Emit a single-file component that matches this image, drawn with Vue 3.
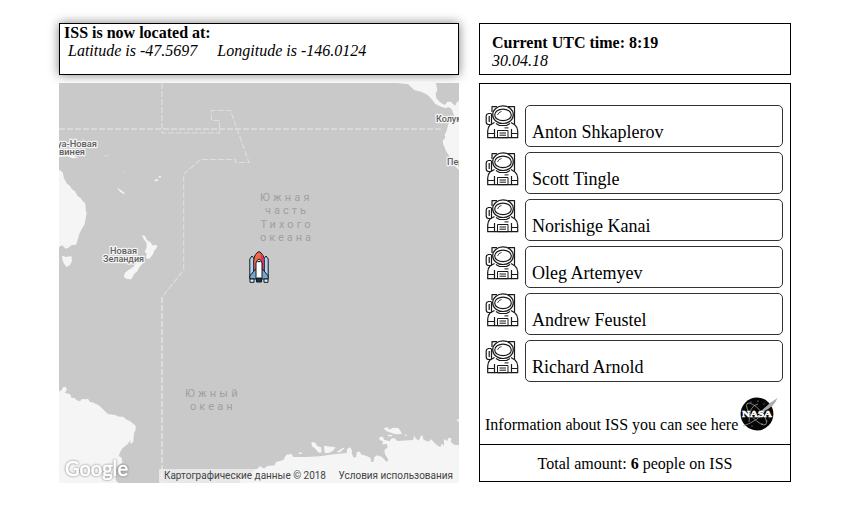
<script setup>
const position = { latitude: '-47.5697', longitude: '-146.0124' }
const crew = [
  'Anton Shkaplerov',
  'Scott Tingle',
  'Norishige Kanai',
  'Oleg Artemyev',
  'Andrew Feustel',
  'Richard Arnold',
]
</script>

<template>
  <main class="page">
    <section class="left">
      <header class="location">
        <b>ISS is now located at:</b>
        <div class="coords">
          <i>Latitude is {{ position.latitude }}</i>
          <i>Longitude is {{ position.longitude }}</i>
        </div>
      </header>

      <svg class="map" width="400" height="400" viewBox="59 83 400 400">
        <rect x="59" y="83" width="400" height="400" fill="#c9c9c9" />

        <g class="borders">
          <path d="M59 129H443" stroke-width="1.6" />
          <path d="M162 83V133H219.5V120.500H211.500V110.500H230.500L249 162.500H235.500V159.500H200.500L183.700 174V270L162 297" />
          <path d="M162 297V483" stroke-width="1.8" />
        </g>

        <g class="land">
          <!-- Australia, Tasmania, New Zealand and the nearby islands -->
          <g transform="translate(50 135) scale(.33333)">
            <path d="M27 104L38 112L42 130L50 145L59 152L66 163L75 169L82 182L92 190L100 200L106 205L107 224L110 236L107 250L104 268L95 282L89 294L83 315L78 329L64 331L55 338L47 341L36 331L27 336Z" />
            <path d="M36 362L49 366L64 363L66 378L60 390L49 396L42 386L38 377Z" />
            <path d="M276 300L285 303L291 316L301 321L307 331L321 330L320 339L313 347L308 359L298 372L288 370L290 356L284 350L290 338L289 322L281 313Z" />
            <path d="M283 373L276 388L267 398L261 410L253 416L244 433L230 432L221 425L226 412L239 403L252 394L259 380L270 372Z" />
            <path d="M27 54L55 58L72 62L84 69L67 70L53 64L27 66Z" />
            <path d="M201 158L205 160L224 174L223 178L211 171Z" />
            <path d="M314 134L324 132L323 138L314 139ZM326 124L333 123L332 128L327 128ZM163 61L169 63L168 66ZM171 57L176 62L174 64ZM221 111L226 112L226 114ZM97 9L102 14L100 16Z" />
          </g>
          <!-- Central and South America -->
          <g transform="translate(250 15) scale(.33333)">
            <path d="M440 204H558L562 226L557 235L559 250L570 262L584 270L592 260L603 260L608 266L616 272L620 262L627 257V390H580L578 377L586 368L584 359L590 347L595 326L607 316L616 310L611 298L605 283L598 277L585 279L570 274L556 267L545 252L532 239L513 230L492 225L475 208Z" />
          </g>
          <path d="M443.500 144.500L446 151L450 157L454 165L459 170V144Z" />
          <!-- Antarctica, western coast -->
          <path transform="translate(50 370) scale(.33333)" d="M27 64L35 61L39 52L47 51L51 60L44 68L60 73L65 84L73 83L80 91L90 94L96 87L109 88L114 86L119 95L130 98L145 105L153 112L164 123L174 132L195 135L207 140L220 140L230 149L240 153L257 167V179L252 190L250 214L246 220L241 222L242 210L233 222L216 236L211 245L206 258L215 263L217 278L205 286L196 297L197 330L205 339H27Z" />
          <!-- Antarctica, eastern coast -->
          <g transform="translate(240 370) scale(.33333)">
            <path d="M0 326L20 319L40 302L60 292L73 295L83 288L104 286L108 276L130 270L139 254L155 252L160 261L200 261L240 259L270 254L320 249L322 236L329 232L336 240L335 250L341 263L349 260L350 246L359 245L365 254L378 257L391 263L394 276L400 276L403 261L412 256L426 261L440 276L445 269L435 253L433 241L443 232L440 221L427 224L429 214L418 209L419 201L429 200L432 209L449 214L455 205L464 205L472 213L506 211L520 210L522 196L527 205L536 212L541 201L546 194L551 209L566 215L573 208L590 225L601 232L605 221L612 227L612 207L622 213L625 204L635 205L632 215L642 224L657 226V339H0Z" />
            <path d="M214 216L226 218L232 229L243 231L245 247L236 248L224 234L216 229ZM252 227L287 232L279 242L266 249L254 249ZM289 247L309 233L314 234L300 247ZM430 175L443 172L447 179L459 173L475 174L481 182L486 192L467 193L453 188L440 184ZM176 248L184 247L186 251L177 252ZM56 290L64 289L65 295L57 295ZM649 150L657 147V157ZM443 194L456 195L457 199L445 199ZM495 193L503 196L495 198Z" />
          </g>
        </g>

        <g class="places">
          <text x="57" y="146.500" textLength="40" lengthAdjust="spacingAndGlyphs">уа-Новая</text>
          <text x="59" y="154.500" textLength="26" lengthAdjust="spacingAndGlyphs">винея</text>
          <text x="110" y="253.500" textLength="27" lengthAdjust="spacingAndGlyphs">Новая</text>
          <text x="103" y="262" textLength="41" lengthAdjust="spacingAndGlyphs">Зеландия</text>
          <text x="436" y="121.500">Колумбия</text>
          <text x="447" y="164.500">Перу</text>
        </g>
        <g class="oceans">
          <text x="260" y="201" textLength="49.500">Южная</text>
          <text x="265" y="214" textLength="41">часть</text>
          <text x="260.500" y="227.500" textLength="50">Тихого</text>
          <text x="260" y="240.500" textLength="51">океана</text>
          <text x="185" y="397" textLength="52.500">Южный</text>
          <text x="190" y="410" textLength="42.500">океан</text>
        </g>

        <text class="google" x="65" y="475.500" textLength="63" lengthAdjust="spacingAndGlyphs">Google</text>

        <rect x="159" y="469" width="300" height="14" fill="#f5f5f5" fill-opacity=".7" />
        <g class="legal">
          <text x="164" y="479" textLength="162" lengthAdjust="spacingAndGlyphs">Картографические данные © 2018</text>
          <text x="338.500" y="479" textLength="114.500" lengthAdjust="spacingAndGlyphs">Условия использования</text>
        </g>

        <!-- Shuttle marker -->
        <g transform="translate(249 251)" stroke="#111820" stroke-width="1" stroke-linejoin="round">
          <path d="M.8 27V8L3 5L5.500 8V27ZM14.500 27V8L17 5L19.200 8V27Z" fill="#b4d4f1" />
          <path d="M4.700 24V9Q5.500 2.500 10 .6Q14.500 2.500 15.300 9V24Z" fill="#f2694a" />
          <path d="M11.500 2Q14.700 4.500 14.900 9V22H12Z" fill="#d8355f" stroke="none" />
          <path d="M7 17.500L.8 25V28H7L10 30L13 28H19.200V25L13 17.500Z" fill="#78a6d3" />
          <path d="M7 28V12Q7.500 9 10 8Q12.500 9 13 12V28Z" fill="#fff" />
          <path d="M8.500 10.500H11.500" stroke-width="1.300" />
          <path d="M7.500 27H12.500V31H7.500Z" fill="#18374e" />
          <path d="M1 28H5V31.300H1ZM15 28H19V31.300H15Z" fill="#e9f2fa" />
        </g>
      </svg>
    </section>

    <section class="right">
      <header class="clock">
        <b>Current UTC time: 8:19</b>
        <i>30.04.18</i>
      </header>

      <div class="panel">
        <ul class="crew">
          <li v-for="name in crew" :key="name">
            <svg class="astronaut" width="34" height="34" viewBox="0 0 34 34">
              <g fill="none" stroke="#1a1a1a" stroke-width="1.200" stroke-linejoin="round">
                <path d="M7 7V1.700H12M23 1.700H29.500V19" />
                <path d="M6 8.500H3.500Q1.200 9 1.200 11V17Q1.200 19.500 4 19.500H6.500M4.200 11V17M6.500 8.500V19" />
                <ellipse cx="18" cy="9.700" rx="10.300" ry="8.800" />
                <ellipse cx="18" cy="9.900" rx="8.300" ry="5.800" />
                <path d="M12.500 10Q13.500 7 16.500 6.500" stroke-width=".8" />
                <path d="M9.500 17.500L5 20Q3 22 2.700 26V32.700H9.500V24M26 17.500L30 20Q32.500 22 32.700 26V32.700H26.500V24" />
                <path d="M2.700 28.500H9.500M26.500 28.500H32.700M9.500 32.700H26.500M11 18.500L14.500 20.500H21.500L25 18.500" />
                <path d="M12.500 25.500H23V32.700H12.500ZM14.500 28H21M14.500 30.200H21M19.500 22.900H23.500" stroke-width="1" />
              </g>
            </svg>
            <span class="name">{{ name }}</span>
          </li>
        </ul>

        <div class="info">
          <span>Information about ISS you can see here</span>
          <svg class="nasa" width="38" height="36" viewBox="0 0 38 36">
            <circle cx="17" cy="17" r="16.400" fill="#050505" />
            <g fill="none" stroke="#aaa" stroke-width=".7">
              <ellipse cx="16.500" cy="17" rx="14" ry="5" transform="rotate(48 16.500 17)" />
              <path d="M9 25Q9 8 18 7M3 29Q18 24 25 14" />
            </g>
            <path d="M37.500 1Q34 11 20 16L17 17Q26 10 30 6Z" fill="#aaa" />
            <g fill="#ccc">
              <circle cx="18" cy="4" r=".6" /><circle cx="24" cy="7" r=".5" /><circle cx="11" cy="5" r=".5" />
              <circle cx="22" cy="27" r=".6" /><circle cx="12" cy="29" r=".5" /><circle cx="27" cy="24" r=".5" />
            </g>
            <text class="nasa-word" x="2" y="20" textLength="30" lengthAdjust="spacingAndGlyphs">NASA</text>
          </svg>
        </div>

        <footer class="total">Total amount:&nbsp;<b>{{ crew.length }}</b>&nbsp;people on ISS</footer>
      </div>
    </section>
  </main>
</template>

<style>
body {
  background: #fff;
}
</style>

<style scoped>
.page {
  display: flex;
  gap: 20px;
  padding: 23px 0 0 59px;
  font: 16px/18px "Liberation Serif", "Times New Roman", serif;
  color: #000;
}

.left,
.right {
  display: flex;
  flex-direction: column;
  gap: 8px;
}

.left {
  width: 400px;
}

.right {
  width: 312px;
}

.location,
.clock {
  box-sizing: border-box;
  height: 52px;
  border: 1px solid #000;
}

.location {
  padding: 0 4px;
  box-shadow: 0 0 10px rgba(0, 0, 0, 0.5);
}

.coords {
  display: flex;
  gap: 20px;
  padding-left: 4px;
}

.clock {
  display: flex;
  flex-direction: column;
  padding: 10px 12px 0;
}

.map {
  display: block;
}

.borders {
  fill: none;
  stroke: #dedede;
  stroke-width: 1.1;
  stroke-dasharray: 6 2;
}

.land {
  fill: #f5f5f5;
}

.places {
  font: 500 9px Roboto, sans-serif;
  fill: #616161;
  stroke: #f5f5f5;
  stroke-width: 2.4px;
  stroke-linejoin: round;
  paint-order: stroke;
}

.oceans {
  font: 11px Roboto, sans-serif;
  fill: #a0a0a0;
}

.google {
  font: 500 21px Lato, sans-serif;
  fill: #fff;
  stroke: #fff;
  stroke-width: 0.5px;
  filter: drop-shadow(0 0 1.2px rgba(0, 0, 0, 0.5));
}

.legal {
  font: 10px Roboto, sans-serif;
  fill: #444;
}

.panel {
  box-sizing: border-box;
  display: flex;
  flex-direction: column;
  height: 399px;
  border: 1px solid #000;
}

.crew {
  display: flex;
  flex-direction: column;
  gap: 5px;
  margin: 0;
  padding: 21px 7px 0 5px;
  list-style: none;
}

.crew li {
  display: flex;
  gap: 6px;
}

.name {
  box-sizing: border-box;
  flex: 1;
  height: 42px;
  padding: 16px 6px 0;
  border: 1px solid #333;
  border-radius: 5px;
  font-size: 18px;
  line-height: 20px;
}

.info {
  display: flex;
  gap: 2px;
  flex: 1;
  padding: 15px 0 0 5px;
}

.info span {
  padding-top: 19px;
}

.nasa-word {
  font: 900 9px "Liberation Serif", serif;
  fill: #fff;
  stroke: #fff;
  stroke-width: 0.5px;
}

.total {
  display: flex;
  justify-content: center;
  height: 36px;
  line-height: 38px;
  border-top: 1px solid #000;
}
</style>
